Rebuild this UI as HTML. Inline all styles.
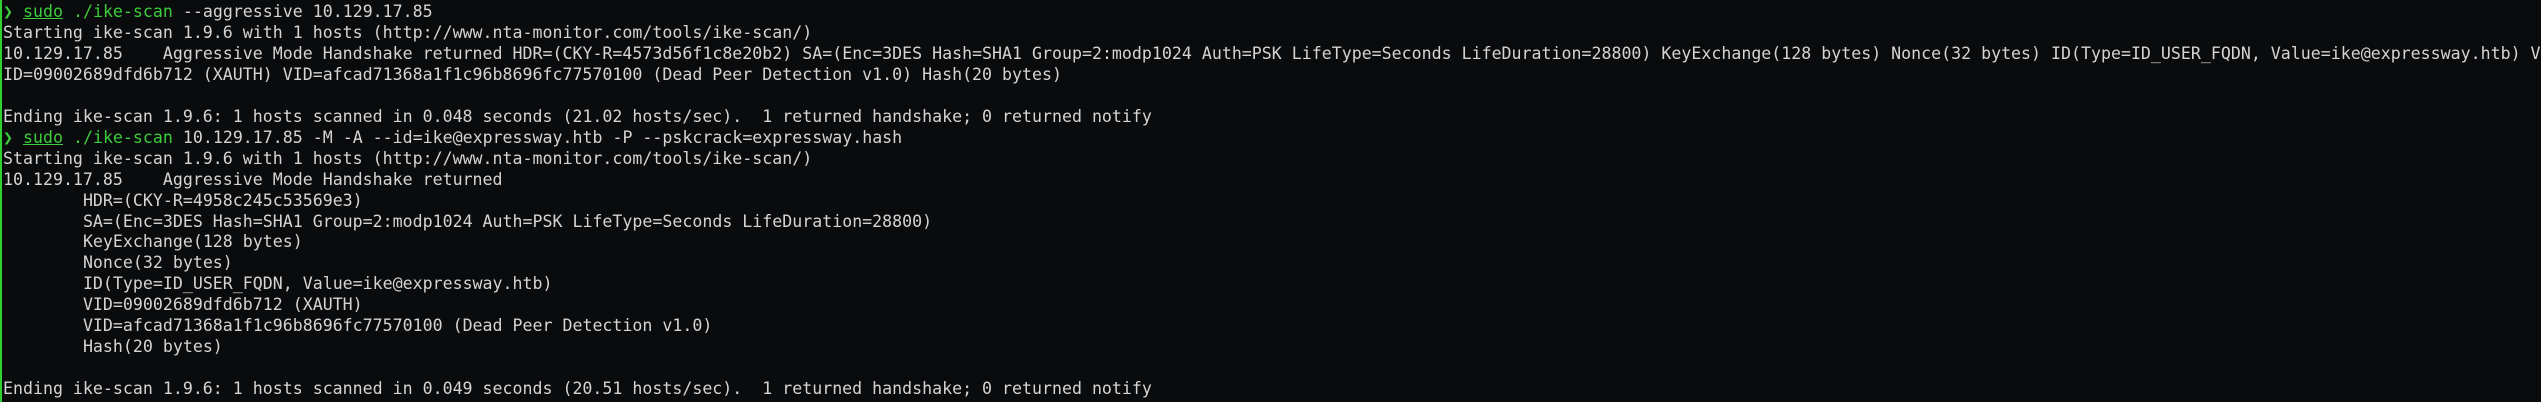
<!DOCTYPE html>
<html><head><meta charset="utf-8"><style>
html,body{margin:0;padding:0;background:#0a0b0d;width:2541px;height:402px;overflow:hidden}
#bar{position:absolute;left:0;top:0;width:2px;height:402px;background:#2fd02f}
pre{position:absolute;left:3px;top:2px;margin:0;font-family:"DejaVu Sans Mono","Liberation Mono",monospace;font-size:16.6px;line-height:20.96px;color:#d4d4d4;white-space:pre;tab-size:8}
.g{color:#3ccc3c}.u{text-decoration:underline}
</style></head><body><div id="bar"></div><pre><span class="g">❯</span> <span class="g u">sudo</span> <span class="g">./ike-scan</span> --aggressive 10.129.17.85
Starting ike-scan 1.9.6 with 1 hosts (http://www.nta-monitor.com/tools/ike-scan/)
10.129.17.85	Aggressive Mode Handshake returned HDR=(CKY-R=4573d56f1c8e20b2) SA=(Enc=3DES Hash=SHA1 Group=2:modp1024 Auth=PSK LifeType=Seconds LifeDuration=28800) KeyExchange(128 bytes) Nonce(32 bytes) ID(Type=ID_USER_FQDN, Value=ike@expressway.htb) V
ID=09002689dfd6b712 (XAUTH) VID=afcad71368a1f1c96b8696fc77570100 (Dead Peer Detection v1.0) Hash(20 bytes)

Ending ike-scan 1.9.6: 1 hosts scanned in 0.048 seconds (21.02 hosts/sec).  1 returned handshake; 0 returned notify
<span class="g">❯</span> <span class="g u">sudo</span> <span class="g">./ike-scan</span> 10.129.17.85 -M -A --id=ike@expressway.htb -P --pskcrack=expressway.hash
Starting ike-scan 1.9.6 with 1 hosts (http://www.nta-monitor.com/tools/ike-scan/)
10.129.17.85	Aggressive Mode Handshake returned
	HDR=(CKY-R=4958c245c53569e3)
	SA=(Enc=3DES Hash=SHA1 Group=2:modp1024 Auth=PSK LifeType=Seconds LifeDuration=28800)
	KeyExchange(128 bytes)
	Nonce(32 bytes)
	ID(Type=ID_USER_FQDN, Value=ike@expressway.htb)
	VID=09002689dfd6b712 (XAUTH)
	VID=afcad71368a1f1c96b8696fc77570100 (Dead Peer Detection v1.0)
	Hash(20 bytes)

Ending ike-scan 1.9.6: 1 hosts scanned in 0.049 seconds (20.51 hosts/sec).  1 returned handshake; 0 returned notify
</pre></body></html>
